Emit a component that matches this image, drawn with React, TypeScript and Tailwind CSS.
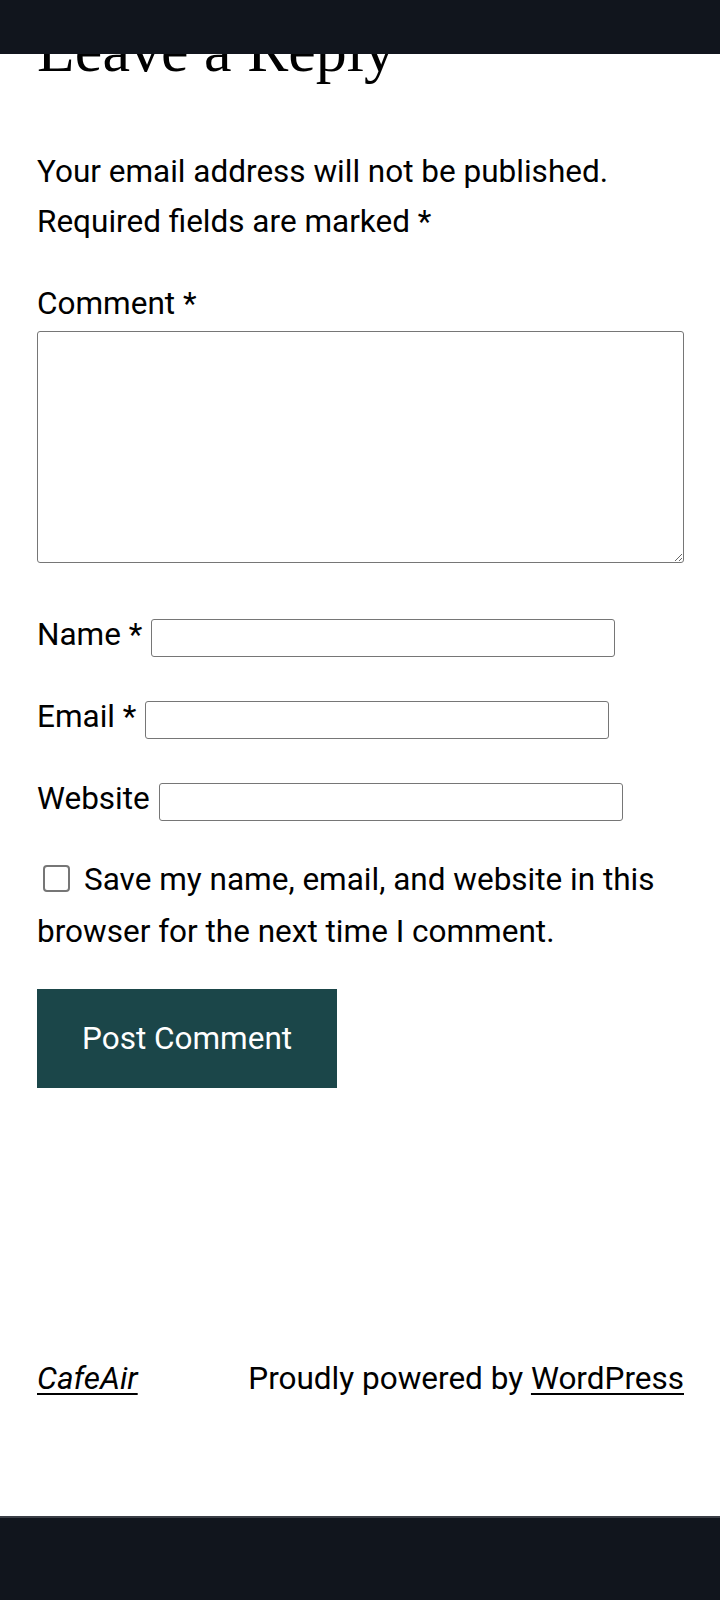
import React from "react";

const sans = "font-['Roboto','Liberation_Sans',sans-serif]";

const Field = ({ label, required }: { label: string; required?: boolean }) => (
  <div className="flex items-center gap-[9px]">
    <label className="mb-[6px] text-[31.5px] leading-none">
      {label}
      {required ? " *" : ""}
    </label>
    <input
      type="text"
      className="h-[38px] w-[464px] rounded-[3px] border border-[#767676] bg-white px-2 outline-none"
    />
  </div>
);

export default function App() {
  return (
    <div className={`relative min-h-[1600px] bg-white text-black ${sans}`}>
      {/* browser chrome / sticky header overlaying the scrolled page */}
      <div className="fixed inset-x-0 top-0 z-10 h-[54px] bg-[#11151d]" />

      <main className="pr-[36px] pl-[37px]">
        <h2 className="mt-[19px] font-['Liberation_Serif',serif] text-[62px] leading-none font-light">
          Leave a Reply
        </h2>

        <p className="mt-[66px] text-[31.5px] leading-[50px]">
          Your email address will not be published.
          <br />
          Required fields are marked *
        </p>

        <form className="mt-[32px]" onSubmit={(e) => e.preventDefault()}>
          <label className="block text-[31.5px] leading-[50px]">Comment *</label>
          <textarea className="mt-[2px] block h-[232px] w-full rounded-[3px] border border-[#767676] outline-none" />

          <div className="mt-[56px] flex flex-col gap-[44px]">
            <Field label="Name" required />
            <Field label="Email" required />
            <Field label="Website" />
          </div>

          <p className="mt-[33px] text-[31.5px] leading-[52px]">
            <input
              type="checkbox"
              className="mr-[14px] ml-[6px] inline-block h-[27px] w-[27px] appearance-none rounded-[4px] border-2 border-[#767676] bg-white align-[-2px]"
            />
            Save my name, email, and website in this browser for the next time I comment.
          </p>

          <button
            type="submit"
            className="mt-[31px] flex h-[99px] items-center bg-[#1b4649] px-[45px] text-[31.5px] text-white"
          >
            Post Comment
          </button>
        </form>

        <footer className="mt-[266px] flex items-baseline justify-between text-[31.5px] leading-[50px]">
          <a href="#" className="italic underline decoration-[2px] underline-offset-[4px]">
            CafeAir
          </a>
          <span>
            Proudly powered by{" "}
            <a href="#" className="underline decoration-[2px] underline-offset-[4px]">
              WordPress
            </a>
          </span>
        </footer>
      </main>

      <div className="fixed inset-x-0 bottom-0 h-[84px] border-t-2 border-[#3a3e46] bg-[#11151d]" />
    </div>
  );
}
